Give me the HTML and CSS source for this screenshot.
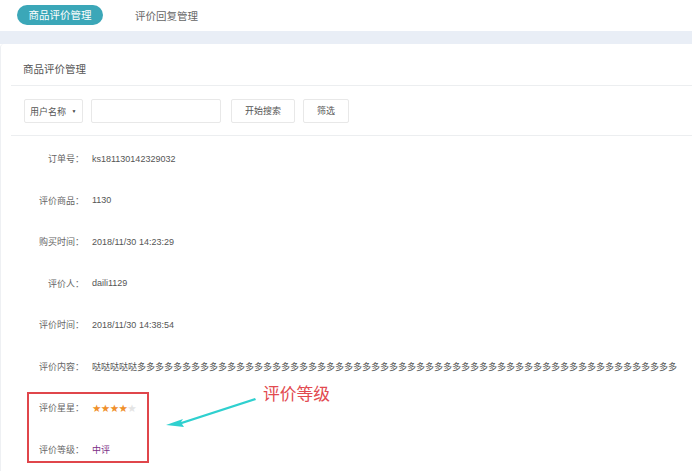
FILE: index.html
```html
<!DOCTYPE html>
<html lang="zh">
<head>
<meta charset="utf-8">
<title>商品评价管理</title>
<link rel="stylesheet" href="styles.css">
</head>
<body>
<div class="tabs">
  <span class="tab active">商品评价管理</span>
  <span class="tab">评价回复管理</span>
</div>
<div class="band"></div>
<div class="card">
  <div class="card-title">商品评价管理</div>
  <div class="search">
    <div class="select">用户名称 <span class="caret">▼</span></div>
    <div class="input"></div>
    <div class="btn btn-search">开始搜索</div>
    <div class="btn btn-filter">筛选</div>
  </div>
  <div class="rows">
    <div class="row"><span class="label">订单号：</span><span class="value">ks181130142329032</span></div>
    <div class="row"><span class="label">评价商品：</span><span class="value">1130</span></div>
    <div class="row"><span class="label">购买时间：</span><span class="value">2018/11/30 14:23:29</span></div>
    <div class="row"><span class="label">评价人：</span><span class="value">daili1129</span></div>
    <div class="row"><span class="label">评价时间：</span><span class="value">2018/11/30 14:38:54</span></div>
    <div class="row"><span class="label">评价内容：</span><span class="value content">哒哒哒哒哒多多多多多多多多多多多多多多多多多多多多多多多多多多多多多多多多多多多多多多多多多多多多多多多多多多多多多多多多多多多多</span></div>
    <div class="row"><span class="label">评价星星：</span><span class="value stars"><span class="on">★★★★</span><span class="off">★</span></span></div>
    <div class="row"><span class="label">评价等级：</span><span class="value level">中评</span></div>
  </div>
</div>
<div class="mark-box"></div>
<div class="mark-text">评价等级</div>
<svg class="mark-arrow" width="100" height="40" viewBox="0 0 100 40">
  <path d="M92 3 L18 27 L20 24 L3 30 L21 32 L19 29 L93 5 Z" fill="#2fd0cf"/>
</svg>
</body>
</html>
```

FILE: styles.css
```css
* { box-sizing: border-box; }
html, body { margin: 0; padding: 0; background: #fff; }
body {
  width: 692px;
  height: 471px;
  overflow: hidden;
  position: relative;
  font-family: "Liberation Sans", "Noto Sans CJK SC", sans-serif;
  color: #555;
}
.tabs {
  height: 31px;
  display: flex;
  align-items: center;
  padding-left: 17px;
  padding-bottom: 1px;
}
.tab {
  font-size: 10.5px;
  color: #666;
}
.tab.active {
  width: 86px;
  height: 20px;
  line-height: 20px;
  border-radius: 10px;
  background: #3ba7b8;
  color: #fff;
  text-align: center;
  margin-right: 32px;
}
.band {
  height: 13px;
  background: #e9eef6;
}
.card {
  background: #fff;
  border-radius: 4px 0 0 0;
  border-left: 1px solid #eef0f3;
  height: 427px;
}
.card-title {
  height: 42px;
  padding-top: 8px;
  line-height: 34px;
  margin-left: 10px;
  padding-left: 12px;
  font-size: 10.5px;
  color: #555;
  border-bottom: 1px solid #eceef0;
}
.search {
  margin-left: 10px;
  height: 50px;
  padding: 13px 0 0 13px;
  display: flex;
  gap: 8px;
  border-bottom: 1px solid #eceef0;
}
.select, .input, .btn {
  height: 24px;
  border: 1px solid #e8e8e8;
  border-radius: 2px;
  font-size: 9px;
  line-height: 22px;
  color: #555;
}
.select {
  width: 59px;
  padding-left: 5px;
}
.caret {
  font-size: 5px;
  vertical-align: 2px;
  margin-left: 3px;
  color: #444;
}
.input { width: 130px; }
.btn { text-align: center; }
.btn-search { width: 64px; margin-left: 2px; }
.btn-filter { width: 46px; }
.rows {
  padding-top: 2px;
}
.row {
  height: 41.5px;
  display: flex;
  align-items: center;
  font-size: 9px;
  white-space: nowrap;
}
.label {
  width: 83px;
  text-align: right;
  color: #666;
  flex: none;
}
.value {
  margin-left: 8px;
  color: #555;
}
.content { overflow: hidden; }
.stars {
  font-family: "DejaVu Sans", sans-serif;
  font-size: 10.5px;
  letter-spacing: -0.6px;
}
.stars .on { color: #f0902a; }
.stars .off { color: #e4e4e4; }
.level { color: #7b2f86; }
.mark-box {
  position: absolute;
  left: 27px;
  top: 392px;
  width: 122px;
  height: 71px;
  border: 2px solid #e0464b;
}
.mark-text {
  position: absolute;
  left: 263px;
  top: 381px;
  font-size: 16.8px;
  color: #e24a4f;
  font-family: "Noto Sans CJK SC", sans-serif;
}
.mark-arrow {
  position: absolute;
  left: 163px;
  top: 395px;
}
```
